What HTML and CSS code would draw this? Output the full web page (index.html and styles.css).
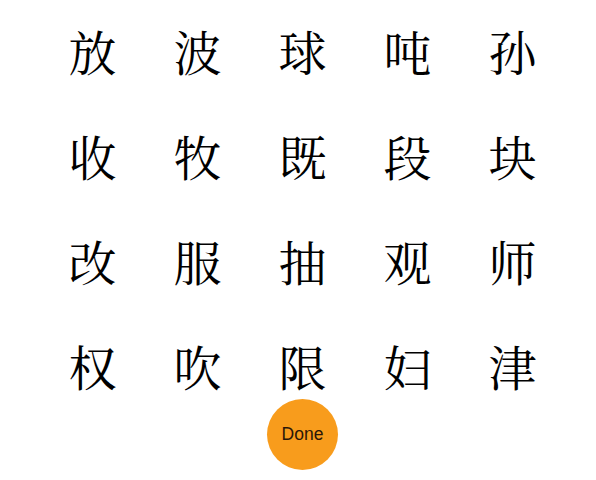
FILE: index.html
```html
<!DOCTYPE html>
<html lang="zh">
<head>
<meta charset="utf-8">
<title>Characters</title>
<link rel="stylesheet" href="styles.css">
</head>
<body>
<main class="board">
  <div class="grid">
    <span class="cell">放</span><span class="cell">波</span><span class="cell">球</span><span class="cell">吨</span><span class="cell">孙</span>
    <span class="cell">收</span><span class="cell">牧</span><span class="cell">既</span><span class="cell">段</span><span class="cell">块</span>
    <span class="cell">改</span><span class="cell">服</span><span class="cell">抽</span><span class="cell">观</span><span class="cell">师</span>
    <span class="cell">权</span><span class="cell">吹</span><span class="cell">限</span><span class="cell">妇</span><span class="cell">津</span>
  </div>
  <div class="actions">
    <button class="done">Done</button>
  </div>
</main>
</body>
</html>
```
FILE: styles.css
```css
html, body {
  margin: 0;
  padding: 0;
  background: #ffffff;
}
.board {
  width: 525px;
  padding-left: 40px;
  display: flex;
  flex-direction: column;
}
.grid {
  display: grid;
  grid-template-columns: repeat(5, 105px);
  grid-auto-rows: 105px;
  margin-top: -2px;
}
.cell {
  display: flex;
  align-items: center;
  justify-content: center;
  font-family: "Noto Serif CJK SC", "Noto Serif SC", "AR PL UMing CN", "Noto Sans CJK SC", serif;
  font-size: 48px;
  line-height: 1;
  color: #000;
}
.actions {
  display: flex;
  justify-content: center;
  margin-top: -19px;
}
.done {
  width: 71px;
  height: 71px;
  border-radius: 50%;
  border: none;
  background: #f89c1c;
  color: #2a1608;
  font-family: "Liberation Sans", Arial, sans-serif;
  font-size: 17.5px;
  padding: 0;
}
```
